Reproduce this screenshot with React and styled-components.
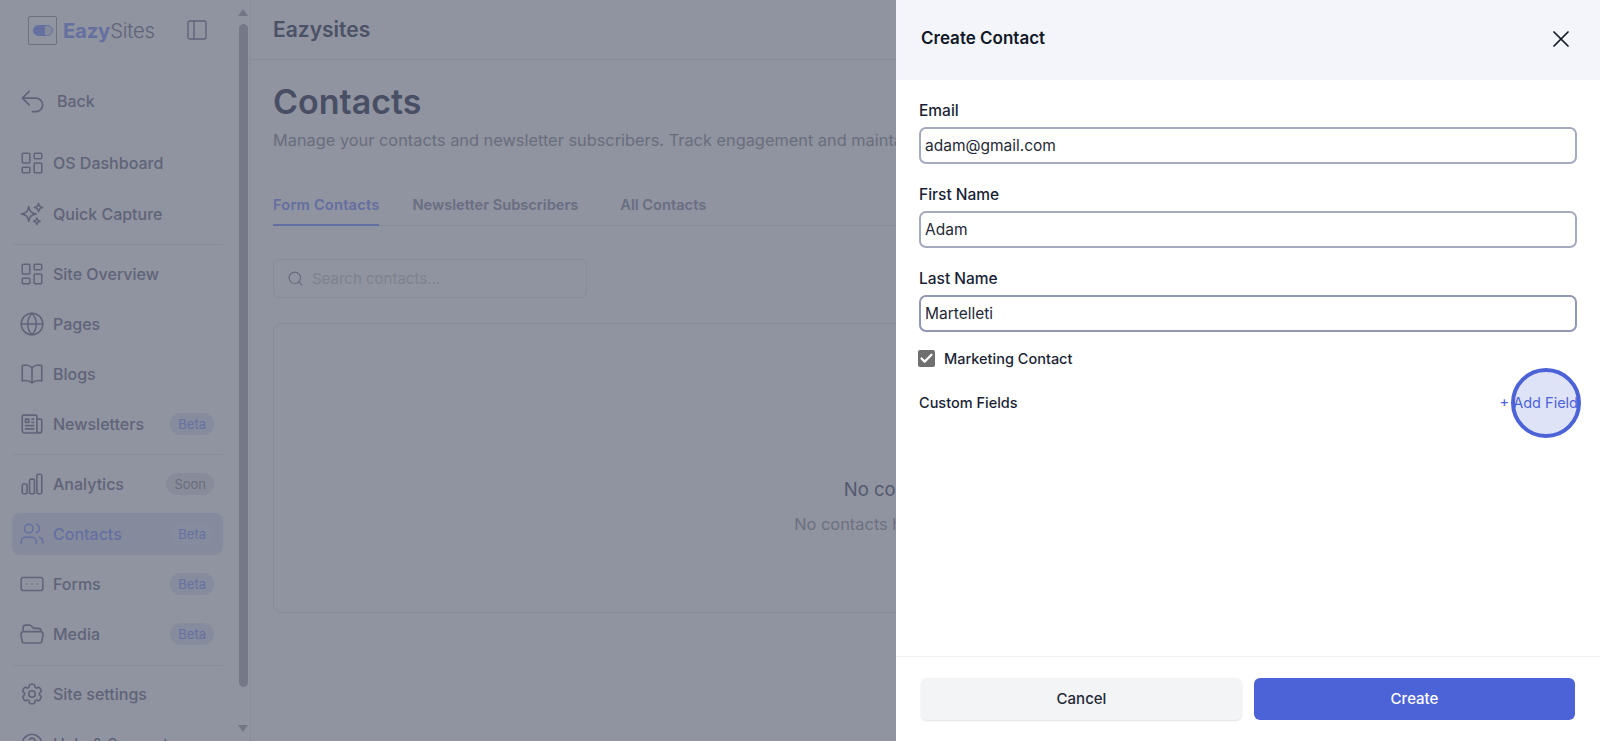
import React from 'react';
import styled, { createGlobalStyle } from 'styled-components';
import { LayoutDashboard, Users, RectangleEllipsis, PanelLeft, Search, X, Check, Globe } from 'lucide-react';
import {
  HiOutlineArrowUturnLeft,
  HiOutlineSparkles,
  HiOutlineBookOpen,
  HiOutlineNewspaper,
  HiOutlineChartBar,
  HiOutlineFolderOpen,
  HiOutlineCog6Tooth,
  HiOutlineQuestionMarkCircle,
} from 'react-icons/hi2';

const GlobalStyle = createGlobalStyle`
  html, body { margin: 0; height: 100%; overflow: hidden; background: #fff; }
  * { box-sizing: border-box; }
  body { font-family: Inter, "Liberation Sans", sans-serif; color: #111827; }
`;

const Page = styled.div`
  display: flex;
  width: 1600px;
  height: 741px;
  overflow: hidden;
`;

const Sidebar = styled.aside`
  position: relative;
  flex: 0 0 251px;
  height: 741px;
  padding: 0 27px 0 12px;
  border-right: 1px solid #edf0f2;
  overflow: hidden;
`;

const Brand = styled.div`
  display: flex;
  align-items: center;
  height: 60px;
  padding-left: 16px;
`;

const LogoBox = styled.div`
  display: flex;
  align-items: center;
  justify-content: center;
  width: 29px;
  height: 29px;
  border: 1px solid #b5b8c2;
  border-radius: 2px;
  margin-right: 6px;
`;

const LogoName = styled.div`
  font-size: 20.3px;
  letter-spacing: -0.2px;
  font-weight: 300;
  color: #9da0b1;
  b { font-weight: 700; color: #a8b8ff; }
`;

const Collapse = styled.div`
  display: flex;
  margin-left: auto;
  margin-right: 14px;
  color: #9da0b1;
`;

const BackRow = styled.div`
  display: flex;
  align-items: center;
  gap: 11px;
  height: 42px;
  margin-top: 20px;
  margin-bottom: 20px;
  padding-left: 7px;
  font-size: 16px;
  font-weight: 500;
  color: #9da0b1;
  svg { flex: none; }
`;

const NavGroup = styled.div`
  display: flex;
  flex-direction: column;
  gap: ${p => p.$gap || 8}px;
  padding-bottom: ${p => p.$pad || 10}px;
  margin-bottom: ${p => p.$after || 0}px;
  border-bottom: ${p => (p.$last ? 'none' : '1px solid #edf0f2')};
`;

const NavRow = styled.div`
  display: flex;
  align-items: center;
  gap: 8px;
  height: 42px;
  padding: 0 9px 0 7px;
  border-radius: 8px;
  font-size: 16px;
  font-weight: 500;
  color: ${p => (p.$active ? '#a8b8ff' : '#9da0b1')};
  background: ${p => (p.$active ? '#e9eef8' : 'transparent')};
  svg { flex: none; color: ${p => (p.$active ? '#a8b8ff' : '#9da0b1')}; }
`;

const Badge = styled.span`
  margin-left: auto;
  padding: 3px 8px;
  border-radius: 12px;
  font-size: 13px;
  font-weight: 400;
  color: ${p => (p.$muted ? '#b1b0b4' : '#a9bcff')};
  background: ${p => (p.$muted ? '#eff0f3' : '#eaeef8')};
`;

const ScrollArrow = styled.div`
  position: absolute;
  left: 238px;
  ${p => (p.$down ? 'top: 725px;' : 'top: 9px;')}
  width: 0;
  height: 0;
  border-left: 5px solid transparent;
  border-right: 5px solid transparent;
  ${p => (p.$down ? 'border-top: 7px solid #c4c6c9;' : 'border-bottom: 7px solid #c4c6c9;')}
`;

const ScrollThumb = styled.div`
  position: absolute;
  left: 239px;
  top: 24px;
  width: 9px;
  height: 663px;
  border-radius: 5px;
  background: #c8c9cc;
`;

const Main = styled.main`
  flex: 1;
  min-width: 0;
`;

const TopBar = styled.div`
  display: flex;
  align-items: center;
  height: 60px;
  padding-left: 22px;
  border-bottom: 1px solid #edf0f2;
  font-size: 21px;
  font-weight: 600;
  color: #767d8b;
`;

const Content = styled.div`
  padding: 20px 24px 0 22px;
`;

const Title = styled.h1`
  margin: 0;
  font-size: 34px;
  line-height: 44px;
  font-weight: 600;
  color: #6f7688;
`;

const Description = styled.p`
  margin: 4px 0 0;
  font-size: 16.35px;
  line-height: 24px;
  white-space: nowrap;
  color: #b1b4b9;
`;

const Tabs = styled.div`
  display: flex;
  margin-top: 38px;
  height: 36px;
  border-bottom: 1px solid #edf0f2;
`;

const Tab = styled.div`
  height: 36px;
  margin-right: ${p => p.$gap}px;
  font-size: 14.65px;
  font-weight: 600;
  line-height: 30px;
  letter-spacing: ${p => (p.$active ? '0.2px' : '0')};
  color: ${p => (p.$active ? '#a7b4ff' : '#b1b4c3')};
  border-bottom: 2px solid ${p => (p.$active ? '#a7b4ff' : 'transparent')};
`;

const SearchBox = styled.div`
  display: flex;
  align-items: center;
  gap: 8px;
  width: 314px;
  height: 39px;
  margin-top: 33px;
  padding-left: 13px;
  border: 1px solid #edf0f2;
  border-radius: 6px;
  font-size: 15px;
  color: #d9dcdd;
  svg { color: #a7abb6; }
`;

const EmptyCard = styled.div`
  display: flex;
  flex-direction: column;
  align-items: center;
  justify-content: center;
  height: 290px;
  margin-top: 25px;
  padding-top: 76px;
  border: 1px solid #edf0f2;
  border-radius: 8px;
`;

const EmptyTitle = styled.div`
  font-size: 18.5px;
  font-weight: 400;
  color: #858b9b;
`;

const EmptyText = styled.div`
  margin-top: 14px;
  font-size: 16.4px;
  color: #b7b9c0;
`;

const Overlay = styled.div`
  position: fixed;
  inset: 0;
  background: rgba(33, 40, 65, 0.5);
  backdrop-filter: blur(0.6px);
`;

const Drawer = styled.div`
  position: fixed;
  top: 0;
  right: 0;
  bottom: 0;
  width: 704px;
  display: flex;
  flex-direction: column;
  background: #fff;
`;

const DrawerHead = styled.div`
  position: relative;
  flex: 0 0 80px;
  padding: 26px 25px;
  font-size: 17px;
  line-height: 24px;
  font-weight: 600;
  color: #111827;
  background: #f4f5fa;
`;

const CloseBtn = styled.div`
  position: absolute;
  top: 25px;
  right: 25px;
  display: flex;
  color: #111827;
`;

const DrawerBody = styled.div`
  flex: 1;
  padding: 20px 23px 0;
`;

const Fields = styled.div`
  display: flex;
  flex-direction: column;
  gap: 20px;
`;

const Label = styled.label`
  display: block;
  margin-bottom: 5px;
  font-size: 15.5px;
  line-height: 22px;
  font-weight: 500;
  color: #1a1f36;
`;

const Input = styled.input`
  display: block;
  width: 100%;
  height: 37px;
  padding: 0 4px;
  border: 2px solid ${p => (p.$strong ? '#9297b3' : '#a6aabd')};
  border-radius: 7px;
  outline: none;
  font-family: inherit;
  font-size: 15.5px;
  color: #1f2937;
  background: #fff;
`;

const CheckRow = styled.div`
  display: flex;
  align-items: center;
  gap: 9px;
  margin-top: 18px;
  margin-left: -1px;
  font-size: 14.5px;
  font-weight: 500;
  color: #1a1f36;
`;

const CheckBox = styled.span`
  display: flex;
  align-items: center;
  justify-content: center;
  width: 17px;
  height: 17px;
  border-radius: 2px;
  background: #6f6f6f;
  color: #fff;
`;

const CustomRow = styled.div`
  display: flex;
  align-items: center;
  justify-content: space-between;
  height: 22px;
  margin-top: 24px;
  font-size: 14.5px;
  font-weight: 500;
  color: #1a1f36;
`;

const AddField = styled.span`
  position: relative;
  margin-right: -1px;
  font-size: 14.5px;
  font-weight: 400;
  color: #4c63d8;
`;

const ClickRing = styled.span`
  position: absolute;
  top: 50%;
  left: 50%;
  width: 70px;
  height: 70px;
  margin: -34px 0 0 -28px;
  border: 4px solid #4c63d8;
  border-radius: 50%;
  background: rgba(76, 99, 216, 0.18);
`;

const DrawerFoot = styled.div`
  display: flex;
  gap: 12px;
  flex: 0 0 85px;
  padding: 21px 25px 0;
  border-top: 1px solid #f0f1f3;
`;

const FootBtn = styled.button`
  flex: 1;
  height: 42px;
  padding: 0 0 2px;
  border: none;
  border-radius: 6px;
  font-family: inherit;
  font-size: 15px;
  font-weight: 500;
  color: ${p => (p.$primary ? '#fff' : '#1f2937')};
  background: ${p => (p.$primary ? '#4c63d8' : '#f3f4f6')};
  box-shadow: ${p => (p.$primary ? 'none' : '0 1px 2px rgba(0, 0, 0, 0.12)')};
`;

const ToggleMark = () => (
  <svg width="20" height="11" viewBox="0 0 20 11">
    <rect x="0.5" y="0.5" width="19" height="10" rx="5" fill="#e9ecf8" stroke="#a8b8ff" />
    <path d="M5.5 0.5H12V10.5H5.5a5 5 0 0 1 0-10z" fill="#a8b8ff" />
  </svg>
);

const ic = { size: 26, strokeWidth: 1.4 };
const hi = { size: 26 };

const App = () => (
  <>
    <GlobalStyle />
    <Page>
      <Sidebar>
        <Brand>
          <LogoBox><ToggleMark /></LogoBox>
          <LogoName><b>Eazy</b>Sites</LogoName>
          <Collapse><PanelLeft size={24} strokeWidth={1.4} /></Collapse>
        </Brand>
        <BackRow><HiOutlineArrowUturnLeft size={27} />Back</BackRow>
        <NavGroup $gap={9} $pad={9} $after={8}>
          <NavRow><LayoutDashboard {...ic} />OS Dashboard</NavRow>
          <NavRow><HiOutlineSparkles {...hi} />Quick Capture</NavRow>
        </NavGroup>
        <NavGroup $pad={9} $after={8}>
          <NavRow><LayoutDashboard {...ic} />Site Overview</NavRow>
          <NavRow><Globe {...ic} />Pages</NavRow>
          <NavRow><HiOutlineBookOpen {...hi} />Blogs</NavRow>
          <NavRow><HiOutlineNewspaper {...hi} />Newsletters<Badge>Beta</Badge></NavRow>
        </NavGroup>
        <NavGroup $after={7}>
          <NavRow><HiOutlineChartBar {...hi} />Analytics<Badge $muted>Soon</Badge></NavRow>
          <NavRow $active><Users {...ic} />Contacts<Badge>Beta</Badge></NavRow>
          <NavRow><RectangleEllipsis {...ic} />Forms<Badge>Beta</Badge></NavRow>
          <NavRow><HiOutlineFolderOpen {...hi} />Media<Badge>Beta</Badge></NavRow>
        </NavGroup>
        <NavGroup $last>
          <NavRow><HiOutlineCog6Tooth {...hi} />Site settings</NavRow>
          <NavRow><HiOutlineQuestionMarkCircle {...hi} />Help &amp; Support</NavRow>
        </NavGroup>
        <ScrollArrow />
        <ScrollThumb />
        <ScrollArrow $down />
      </Sidebar>
      <Main>
        <TopBar>Eazysites</TopBar>
        <Content>
          <Title>Contacts</Title>
          <Description>Manage your contacts and newsletter subscribers. Track engagement and maintain your audience.</Description>
          <Tabs>
            <Tab $active $gap={33}>Form Contacts</Tab>
            <Tab $gap={42}>Newsletter Subscribers</Tab>
            <Tab $gap={0}>All Contacts</Tab>
          </Tabs>
          <SearchBox><Search size={17} strokeWidth={1.5} />Search contacts...</SearchBox>
          <EmptyCard>
            <EmptyTitle>No contacts found</EmptyTitle>
            <EmptyText>No contacts have been added yet</EmptyText>
          </EmptyCard>
        </Content>
      </Main>
    </Page>
    <Overlay />
    <Drawer>
      <DrawerHead>
        Create Contact
        <CloseBtn><X size={28} strokeWidth={1.5} /></CloseBtn>
      </DrawerHead>
      <DrawerBody>
        <Fields>
          <div>
            <Label>Email</Label>
            <Input readOnly value="adam@gmail.com" />
          </div>
          <div>
            <Label>First Name</Label>
            <Input readOnly value="Adam" />
          </div>
          <div>
            <Label>Last Name</Label>
            <Input readOnly $strong value="Martelleti" />
          </div>
        </Fields>
        <CheckRow>
          <CheckBox><Check size={15} strokeWidth={3.5} /></CheckBox>
          Marketing Contact
        </CheckRow>
        <CustomRow>
          Custom Fields
          <AddField><ClickRing />+ Add Field</AddField>
        </CustomRow>
      </DrawerBody>
      <DrawerFoot>
        <FootBtn>Cancel</FootBtn>
        <FootBtn $primary>Create</FootBtn>
      </DrawerFoot>
    </Drawer>
  </>
);

export default App;
